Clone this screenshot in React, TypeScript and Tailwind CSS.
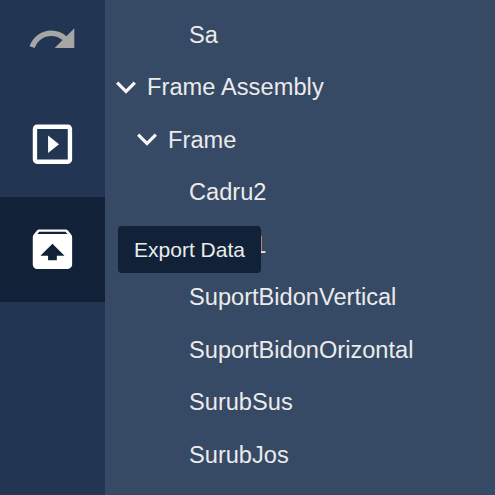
import clsx from "clsx";
import React from "react";
import {
	MdExpandMore,
	MdRedo,
	MdSlideshow,
	MdUnarchive,
} from "react-icons/md";

const tools = [
	{ label: "Redo", icon: MdRedo, disabled: true },
	{ label: "Simulate", icon: MdSlideshow },
	{ label: "Export Data", icon: MdUnarchive, active: true },
];

const nodes: { label: string; level: number; expanded?: boolean }[] = [
	{ label: "Sa", level: 2 },
	{ label: "Frame Assembly", level: 0, expanded: true },
	{ label: "Frame", level: 1, expanded: true },
	{ label: "Cadru2", level: 2 },
	{ label: "Cadru1", level: 2 },
	{ label: "SuportBidonVertical", level: 2 },
	{ label: "SuportBidonOrizontal", level: 2 },
	{ label: "SurubSus", level: 2 },
	{ label: "SurubJos", level: 2 },
];

const indents = ["pl-0", "pl-[21px]", "pl-[42px]"];

function Toolbar() {
	return (
		<nav className="-mt-[13px] w-[105px] shrink-0">
			{tools.map(({ label, icon: Icon, disabled, active }) => (
				<button
					key={label}
					type="button"
					aria-label={label}
					disabled={disabled}
					className={clsx(
						"relative flex h-[105px] w-full items-center justify-center",
						disabled ? "text-[#a6a6a6]" : "text-white",
						active && "bg-[#112238]",
					)}
				>
					<Icon
						className="size-[52.5px] translate-x-[0.2px]"
						aria-hidden="true"
					/>
					{active && (
						<span className="absolute top-[29px] left-[118px] z-10 flex h-[47px] w-[143px] items-center justify-center rounded-[4px] bg-[#112238] text-[21px] whitespace-nowrap text-[#ebebeb]">
							{label}
						</span>
					)}
				</button>
			))}
		</nav>
	);
}

function Tree() {
	return (
		<ul className="flex-1 bg-[#364965] pt-[9px] pl-[6px] text-[23.625px] text-[#ebebeb]">
			{nodes.map(({ label, level, expanded }) => (
				<li
					key={label}
					className={clsx("flex h-[52.5px] items-center", indents[level])}
				>
					<span className="flex w-[36px] shrink-0 items-center">
						{expanded && (
							<MdExpandMore
								className="-ml-[5px] size-[40px] shrink-0 -translate-y-[0.8px] text-[#f5f5f5]"
								aria-hidden="true"
							/>
						)}
					</span>
					<span className={clsx(expanded && "tracking-[0.07px]")}>{label}</span>
				</li>
			))}
		</ul>
	);
}

export default function App() {
	return (
		<div className="flex h-[495px] w-[495px] overflow-hidden bg-[#223552] font-['Liberation_Sans',Arial,sans-serif]">
			<Toolbar />
			<Tree />
		</div>
	);
}
